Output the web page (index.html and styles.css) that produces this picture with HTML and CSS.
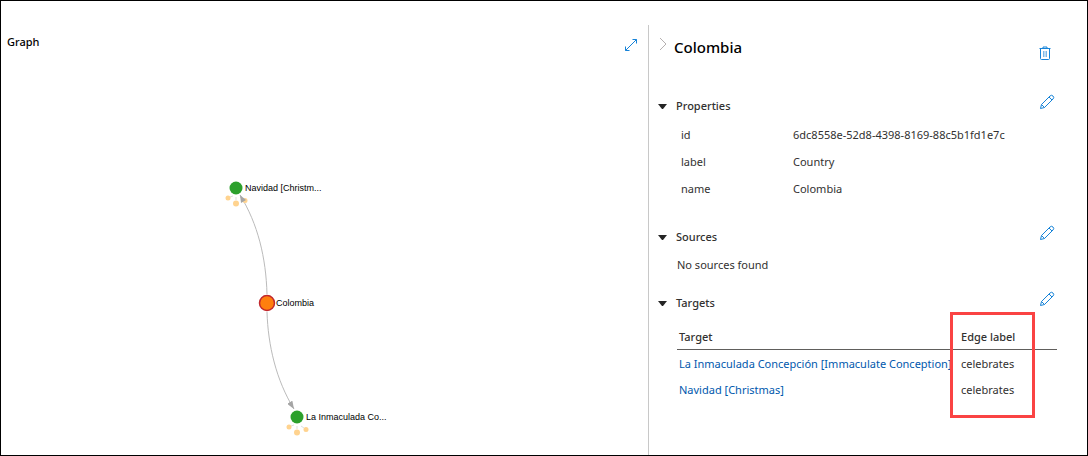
FILE: index.html
```html
<!DOCTYPE html>
<html lang="en">
<head>
    <meta charset="UTF-8">
    <meta name="viewport" content="width=device-width, initial-scale=1.0">
    <title>Graph</title>
    <link rel="stylesheet" href="styles.css">
</head>
<body>
    <div class="explorer">
        <!-- Graph -->
        <main class="graph">
            <div class="graph-header">
                <h2>Graph</h2>
                <button type="button" class="icon-btn" aria-label="Expand graph">
                    <svg width="14" height="14" viewBox="0 0 14 14"><path d="M1.5 12.5l11-11M8.5 1.5h4v4M1.5 8.5v4h4"/></svg>
                </button>
            </div>
            <svg class="canvas" width="600" height="392" viewBox="0 59 600 392">
                <defs>
                    <marker id="arrow" viewBox="0 0 8 6" refX="8" refY="3" markerWidth="8" markerHeight="6" markerUnits="userSpaceOnUse" orient="auto">
                        <path d="M0 0L8 3L0 6z" fill="#a5a5a5"/>
                    </marker>
                </defs>
                <path class="edge" d="M266 294C265 258 257 224 239 195"/>
                <path class="edge" d="M266 312C267 345 275 380 293 409" marker-end="url(#arrow)"/>

                <g transform="translate(235 188)">
                    <path class="stub" d="M-3 8l-3 1M0 9v3M4 9l3 2"/>
                    <circle class="more" cx="-8" cy="10" r="2.5"/>
                    <circle class="more" cx="0" cy="15.5" r="3"/>
                    <circle class="more" cx="9" cy="12.5" r="2.5"/>
                    <circle class="node" cx="0" cy="0" r="6.5"/>
                    <text x="9" y="3">Navidad [Christm...</text>
                </g>
                <path d="M239 195l6 5-5 3z" fill="#a5a5a5"/>
                <g transform="translate(296 417)">
                    <path class="stub" d="M-3 8l-3 1M0 9v3M4 9l3 2"/>
                    <circle class="more" cx="-8" cy="10" r="2.5"/>
                    <circle class="more" cx="0" cy="15.5" r="3"/>
                    <circle class="more" cx="9" cy="12.5" r="2.5"/>
                    <circle class="node" cx="0" cy="0" r="6.5"/>
                    <text x="9" y="3">La Inmaculada Co...</text>
                </g>
                <g transform="translate(266 303)">
                    <circle class="node-selected" cx="0" cy="0" r="7.5"/>
                    <text x="9" y="3">Colombia</text>
                </g>
            </svg>
        </main>

        <!-- Details of the selected vertex -->
        <aside class="details">
            <header class="details-header">
                <button type="button" class="icon-btn collapse" aria-label="Collapse">
                    <svg width="8" height="14" viewBox="0 0 8 14"><path d="M1 1l6 6-6 6"/></svg>
                </button>
                <h1>Colombia</h1>
                <button type="button" class="icon-btn delete" aria-label="Delete">
                    <svg width="12" height="14" viewBox="0 0 12 14"><path d="M0.5 2.5h11M4 2.5V1h4v1.5M1.5 2.5v10q0 1 1 1h7q1 0 1-1v-10"/><path class="soft" d="M4.5 5v6M6 5v6M7.5 5v6"/></svg>
                </button>
            </header>

            <section>
                <div class="section-header">
                    <button type="button" class="toggle" aria-label="Toggle properties"></button>
                    <h2>Properties</h2>
                    <button type="button" class="icon-btn" aria-label="Edit properties">
                        <svg width="16" height="16" viewBox="0 0 16 16"><path d="M1.5 14.5l1-4 8.5-8.5a2.1 2.1 0 0 1 3 3L5.5 13.5zM2.5 10.5l3 3M10 3l3 3"/></svg>
                    </button>
                </div>
                <dl class="properties">
                    <dt>id</dt><dd>6dc8558e-52d8-4398-8169-88c5b1fd1e7c</dd>
                    <dt>label</dt><dd>Country</dd>
                    <dt>name</dt><dd>Colombia</dd>
                </dl>
            </section>

            <section>
                <div class="section-header">
                    <button type="button" class="toggle" aria-label="Toggle sources"></button>
                    <h2>Sources</h2>
                    <button type="button" class="icon-btn" aria-label="Edit sources">
                        <svg width="16" height="16" viewBox="0 0 16 16"><path d="M1.5 14.5l1-4 8.5-8.5a2.1 2.1 0 0 1 3 3L5.5 13.5zM2.5 10.5l3 3M10 3l3 3"/></svg>
                    </button>
                </div>
                <p class="empty">No sources found</p>
            </section>

            <section>
                <div class="section-header">
                    <button type="button" class="toggle" aria-label="Toggle targets"></button>
                    <h2>Targets</h2>
                    <button type="button" class="icon-btn" aria-label="Edit targets">
                        <svg width="16" height="16" viewBox="0 0 16 16"><path d="M1.5 14.5l1-4 8.5-8.5a2.1 2.1 0 0 1 3 3L5.5 13.5zM2.5 10.5l3 3M10 3l3 3"/></svg>
                    </button>
                </div>
                <div class="targets">
                    <table>
                        <thead>
                            <tr><th>Target</th><th class="edge-col">Edge label</th></tr>
                        </thead>
                        <tbody>
                            <tr><td><a href="#">La Inmaculada Concepción [Immaculate Conception]</a></td><td>celebrates</td></tr>
                            <tr><td><a href="#">Navidad [Christmas]</a></td><td>celebrates</td></tr>
                        </tbody>
                    </table>
                    <div class="highlight"></div>
                </div>
            </section>
        </aside>
    </div>
</body>
</html>
```

FILE: styles.css
```css
* {
    box-sizing: border-box;
}
body {
    margin: 0;
    font-family: "Noto Sans", "Open Sans", sans-serif;
    font-size: 11px;
    color: #323130;
    background: #fff;
}
h1, h2, p, dl, dd {
    margin: 0;
}
h1 {
    font-size: 15px;
    line-height: 22px;
    font-weight: 500;
    color: #000;
}
h2 {
    font-size: 11px;
    line-height: 28px;
    font-weight: 500;
}
button {
    padding: 0;
    border: none;
    background: none;
    cursor: pointer;
}
svg {
    display: block;
}
.explorer {
    display: flex;
    min-height: 100vh;
    padding-top: 24px;
    border: 1px solid #000;
}
.icon-btn svg {
    fill: none;
    stroke: #1683d8;
}
.icon-btn .soft {
    stroke: #7db9e8;
}

/* Graph */
.graph {
    flex: 1;
    min-width: 0;
}
.graph-header {
    display: flex;
    justify-content: space-between;
    align-items: center;
    height: 34px;
    padding: 0 10px 0 6px;
}
.graph-header .icon-btn {
    padding-top: 5px;
}
.graph-header h2 {
    color: #000;
}
.canvas {
    max-width: 100%;
    font-family: "Liberation Sans", Arial, sans-serif;
    font-size: 9px;
    fill: #000;
}
.edge {
    fill: none;
    stroke: #bbb;
}
.stub {
    fill: none;
    stroke: #ddd;
}
.more {
    fill: #ffd38f;
}
.node {
    fill: #2ca02c;
}
.node-selected {
    fill: #ff7f0e;
    stroke: #c1272d;
    stroke-width: 1.5px;
}

/* Details */
.details {
    width: 439px;
    padding-right: 30px;
    border-left: 1px solid #c8c8c8;
}
.details-header {
    display: flex;
    align-items: flex-start;
    height: 67px;
    padding: 11px 6px 0 10px;
}
.details-header h1 {
    flex: 1;
    margin-left: 7px;
}
.collapse {
    padding-top: 1px;
}
.collapse svg {
    stroke: #b5b0b0;
}
.icon-btn.delete {
    padding-top: 10px;
}
.section-header {
    display: flex;
    align-items: flex-start;
    height: 28px;
    padding: 0 2px 0 9px;
}
.section-header h2 {
    flex: 1;
    margin-left: 9px;
}
.section-header .icon-btn {
    padding-top: 2px;
}
.toggle {
    width: 9px;
    height: 28px;
}
.toggle::before {
    content: "";
    display: block;
    border: 4px solid transparent;
    border-top: 5px solid #252525;
    border-bottom: none;
}
.properties {
    display: grid;
    grid-template-columns: 112px 1fr;
    padding: 1px 0 21px 32px;
    line-height: 27px;
}
.empty {
    padding: 0 0 10px 28px;
    line-height: 28px;
}
.targets {
    position: relative;
    margin-left: 28px;
    padding-top: 8px;
}
table {
    width: 100%;
    table-layout: fixed;
    border-collapse: collapse;
}
th, td {
    padding: 1px 0 0 2px;
    line-height: 26px;
    text-align: left;
    white-space: nowrap;
}
td {
    line-height: 25px;
}
th {
    padding-top: 0;
    line-height: 24px;
    font-weight: 500;
    border-bottom: 1px solid #605e5c;
}
.edge-col {
    width: 98px;
}
a {
    color: #0058ad;
    text-decoration: none;
}

/* Marks the edge label column */
.highlight {
    position: absolute;
    top: -5px;
    right: 22px;
    width: 85px;
    height: 106px;
    border: 3px solid #fa4343;
}
```
